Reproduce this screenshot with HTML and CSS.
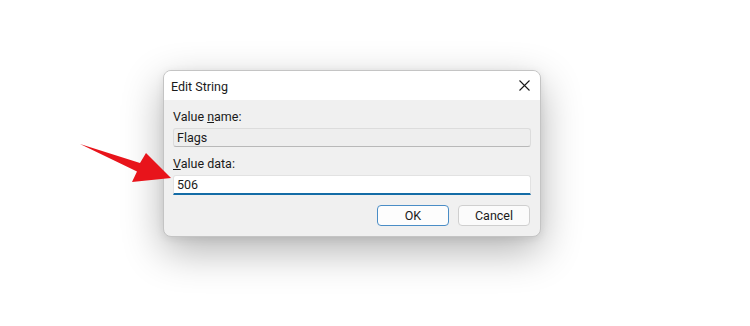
FILE: index.html
```html
<!DOCTYPE html>
<html lang="en">
<head>
  <meta charset="UTF-8">
  <meta name="viewport" content="width=device-width, initial-scale=1.0">
  <title>Edit String</title>
  <link rel="stylesheet" href="styles.css">
</head>
<body>
  <div class="dialog">
    <!-- Title bar -->
    <div class="titlebar">
      <span class="title">Edit String</span>
      <button class="close-btn" aria-label="Close">
        <svg width="11" height="11" viewBox="0 0 11 11">
          <path d="M0.5 0.5 L10.5 10.5 M10.5 0.5 L0.5 10.5" stroke="#1a1a1a" stroke-width="1.1" fill="none"/>
        </svg>
      </button>
    </div>

    <!-- Fields -->
    <div class="content">
      <label class="label">Value <u>n</u>ame:</label>
      <div class="field readonly">Flags</div>

      <label class="label second"><u>V</u>alue data:</label>
      <div class="field active">506</div>

      <div class="actions">
        <button class="btn default">OK</button>
        <button class="btn">Cancel</button>
      </div>
    </div>
  </div>

  <!-- Red pointer arrow -->
  <svg class="arrow" width="750" height="326" viewBox="0 0 750 326">
    <polygon points="80,144 140,163 146,153 171,178 132,182 137,171.5" fill="#e8141b"/>
  </svg>
</body>
</html>
```

FILE: styles.css
```css
html, body {
  height: 100%;
}

body {
  margin: 0;
  padding: 70px 0 0 163px;
  box-sizing: border-box;
  background: #ffffff;
  font-family: Roboto, "Liberation Sans", Arial, sans-serif;
  font-size: 12px;
  color: #1a1a1a;
}

.dialog {
  width: 376px;
  border: 1px solid #c4c4c4;
  border-radius: 8px;
  background: #f0f0f0;
  box-shadow: 0 14px 40px rgba(0, 0, 0, 0.3), 0 2px 8px rgba(0, 0, 0, 0.08);
  overflow: hidden;
}

.titlebar {
  height: 29px;
  background: #ffffff;
  display: flex;
  align-items: center;
  justify-content: space-between;
  padding: 0 10px 0 7px;
}

.title {
  font-size: 12.5px;
  padding-top: 1px;
}

.close-btn {
  border: none;
  background: none;
  padding: 0;
  width: 11px;
  height: 11px;
  display: flex;
}

.content {
  padding: 9px 9px 10px 9px;
  display: flex;
  flex-direction: column;
}

.label {
  line-height: 16px;
  margin-bottom: 3px;
  font-size: 12.5px;
}

.label.second {
  margin-top: 9px;
}

.field {
  height: 17px;
  line-height: 17px;
  padding: 0 3px;
  border: 1px solid #dcdcdc;
  border-radius: 3px;
  font-size: 12.5px;
}

.field.readonly {
  background: #eeeeee;
  border-bottom-color: #b8b8b8;
}

.field.active {
  background: #ffffff;
  border-color: #e2e2e2;
  border-bottom: 2px solid #146ca6;
  border-radius: 3px 3px 0 0;
}

.actions {
  display: flex;
  justify-content: flex-end;
  gap: 9px;
  margin-top: 10px;
  padding-right: 1px;
}

.btn {
  width: 72px;
  height: 21px;
  padding: 0;
  font-family: inherit;
  font-size: 12.5px;
  color: #1a1a1a;
  background: #fbfbfb;
  border: 1px solid #cfcfcf;
  border-radius: 4px;
}

.btn.default {
  border-color: #4a8dc6;
  background: #fdfdfd;
}

.arrow {
  position: absolute;
  left: 0;
  top: 0;
  pointer-events: none;
}
```
